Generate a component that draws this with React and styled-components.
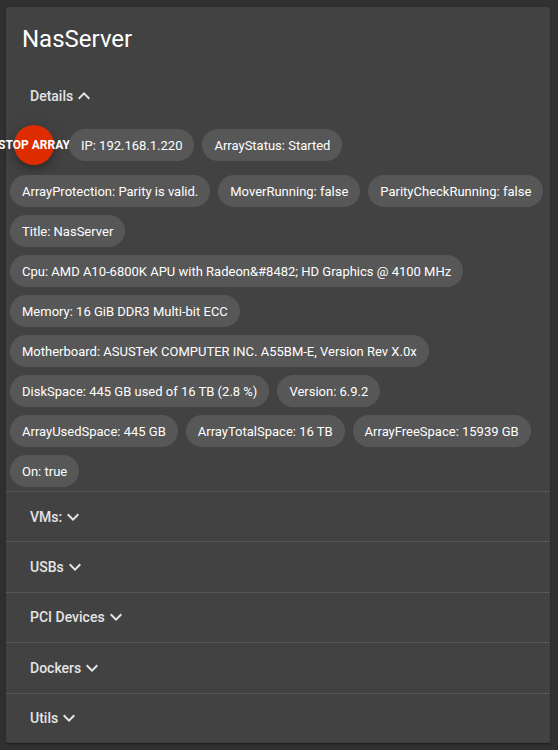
import React from "react";
import styled, { createGlobalStyle } from "styled-components";

const GlobalStyle = createGlobalStyle`
  html, body {
    margin: 0;
    padding: 0;
    background: #303030;
    font-family: Roboto, "Liberation Sans", Arial, sans-serif;
    -webkit-font-smoothing: antialiased;
  }
`;

const Page = styled.div`
  padding: 7px 8px 7px 6px;
`;

const Card = styled.div`
  width: 544px;
  background: #424242;
  border-radius: 2px;
  box-shadow: 0 2px 1px -1px rgba(0, 0, 0, 0.2), 0 1px 1px 0 rgba(0, 0, 0, 0.14),
    0 1px 3px 0 rgba(0, 0, 0, 0.12);
`;

const Header = styled.div`
  padding: 16px 16px 0;
`;

const Title = styled.h1`
  margin: 0;
  font-size: 24px;
  font-weight: 400;
  line-height: 32px;
  color: #fff;
`;

const Section = styled.div`
  padding: ${(p) => (p.$first ? "23px 16px 5px" : "6.7px 16px")};
  border-top: ${(p) => (p.$divider ? "1px solid #575757" : "none")};
`;

const Toggle = styled.button`
  display: inline-flex;
  align-items: center;
  height: 36px;
  padding: 0 8px;
  border: none;
  background: transparent;
  color: #e4e4e4;
  font-family: inherit;
  font-size: 14px;
  font-weight: 500;
  line-height: 1;
  cursor: pointer;
`;

const Chevron = styled.svg`
  width: 24px;
  height: 24px;
  fill: currentColor;
  margin-left: -1px;
`;

const ChipWrap = styled.div`
  display: flex;
  flex-wrap: wrap;
  align-items: center;
`;

const Fab = styled.button`
  flex: none;
  width: 40px;
  height: 40px;
  margin: 6px 11px 6px 8px;
  padding: 0;
  border: none;
  border-radius: 50%;
  background: #dd2c00;
  color: #fff;
  font-family: inherit;
  font-size: 12px;
  font-weight: 700;
  white-space: nowrap;
  display: flex;
  align-items: center;
  justify-content: center;
  overflow: visible;
  box-shadow: 0 3px 5px -1px rgba(0, 0, 0, 0.2), 0 6px 10px 0 rgba(0, 0, 0, 0.14),
    0 1px 18px 0 rgba(0, 0, 0, 0.12);
`;

const Chip = styled.span`
  display: inline-flex;
  align-items: center;
  height: 32px;
  margin: 4px;
  padding: 0 12px;
  border-radius: 16px;
  background: #575757;
  color: #fff;
  font-size: 13px;
  white-space: nowrap;
`;

const ExpandMore = () => (
  <Chevron viewBox="0 0 24 24">
    <path d="M16.59 8.59L12 13.17 7.41 8.59 6 10l6 6 6-6z" />
  </Chevron>
);

const ExpandLess = () => (
  <Chevron viewBox="0 0 24 24">
    <path d="M12 8l-6 6 1.41 1.41L12 10.83l4.59 4.58L18 14z" />
  </Chevron>
);

const details = [
  "IP: 192.168.1.220",
  "ArrayStatus: Started",
  "ArrayProtection: Parity is valid.",
  "MoverRunning: false",
  "ParityCheckRunning: false",
  "Title: NasServer",
  "Cpu: AMD A10-6800K APU with Radeon&#8482; HD Graphics @ 4100 MHz",
  "Memory: 16 GiB DDR3 Multi-bit ECC",
  "Motherboard: ASUSTeK COMPUTER INC. A55BM-E, Version Rev X.0x",
  "DiskSpace: 445 GB used of 16 TB (2.8 %)",
  "Version: 6.9.2",
  "ArrayUsedSpace: 445 GB",
  "ArrayTotalSpace: 16 TB",
  "ArrayFreeSpace: 15939 GB",
  "On: true",
];

const sections = ["VMs:", "USBs", "PCI Devices", "Dockers", "Utils"];

export default function App() {
  return (
    <>
      <GlobalStyle />
      <Page>
        <Card>
          <Header>
            <Title>NasServer</Title>
          </Header>
          <Section $first>
            <Toggle>
              Details
              <ExpandLess />
            </Toggle>
          </Section>
          <ChipWrap>
            <Fab>STOP ARRAY</Fab>
            {details.map((d) => (
              <Chip key={d}>{d}</Chip>
            ))}
          </ChipWrap>
          {sections.map((s) => (
            <Section key={s} $divider>
              <Toggle>
                {s}
                <ExpandMore />
              </Toggle>
            </Section>
          ))}
        </Card>
      </Page>
    </>
  );
}
